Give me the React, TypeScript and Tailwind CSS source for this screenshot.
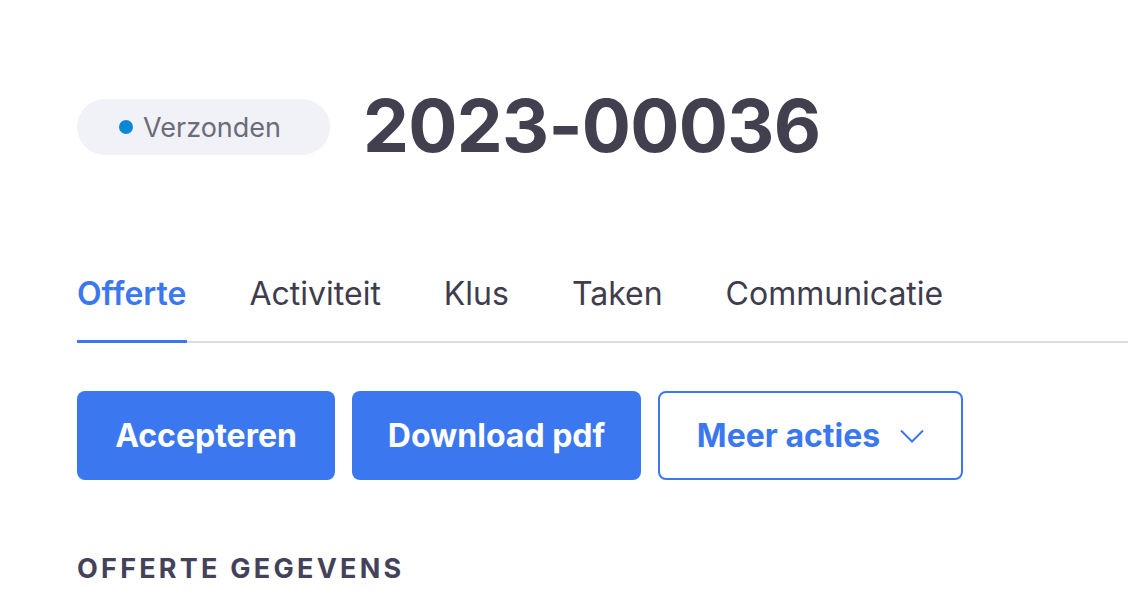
import React from 'react';

const tabs = ['Offerte', 'Activiteit', 'Klus', 'Taken', 'Communicatie'];

export default function App() {
  return (
    <main className="min-h-screen bg-white pl-[77px] pt-[99px] font-['Inter',sans-serif] text-[#42404f]">
      <header className="flex h-[56px] items-center gap-[33px]">
        <div className="flex h-[56px] w-[253px] items-center gap-[10px] rounded-full bg-[#f1f2f7] pl-[42px]">
          <span className="h-[14px] w-[14px] rounded-full bg-[#0b87d6]" />
          <span className="text-[27px] leading-none text-[#6c6b7a]">Verzonden</span>
        </div>
        <h1 className="-mt-[4px] text-[73px] font-bold leading-none tracking-[-0.01em] text-[#42404f]">2023-00036</h1>
      </header>

      <nav className="mt-[121px] flex gap-[63px] border-b-2 border-[#dcdce3]">
        {tabs.map((tab, i) => (
          <div
            key={tab}
            className={
              i === 0
                ? '-mb-[2px] border-b-[3px] border-[#3b78ef] pb-[26px] text-[32px] font-semibold leading-[36px] text-[#3b78ef]'
                : 'pb-[29px] text-[32px] leading-[36px] text-[#3e3c4d]'
            }
          >
            {tab}
          </div>
        ))}
      </nav>

      <div className="mt-[48px] flex gap-[17px]">
        <button className="flex h-[89px] w-[258px] items-center justify-center rounded-[8px] bg-[#3b78ef] text-[32px] font-bold text-white">
          Accepteren
        </button>
        <button className="flex h-[89px] w-[289px] items-center justify-center rounded-[8px] bg-[#3b78ef] text-[32px] font-bold text-white">
          Download pdf
        </button>
        <button className="flex h-[89px] w-[305px] items-center justify-center gap-[20px] rounded-[8px] border-2 border-[#3b78ef] bg-white text-[32px] font-bold text-[#3b78ef]">
          Meer acties
          <svg width="24" height="14" viewBox="0 0 24 14" fill="none" stroke="#3b78ef" strokeWidth="2">
            <path d="M1 1.5 12 12.5 23 1.5" />
          </svg>
        </button>
      </div>

      <h2 className="mt-[71px] text-[27px] font-bold uppercase leading-[35px] tracking-[0.12em] text-[#44425a]">
        Offerte gegevens
      </h2>
    </main>
  );
}
